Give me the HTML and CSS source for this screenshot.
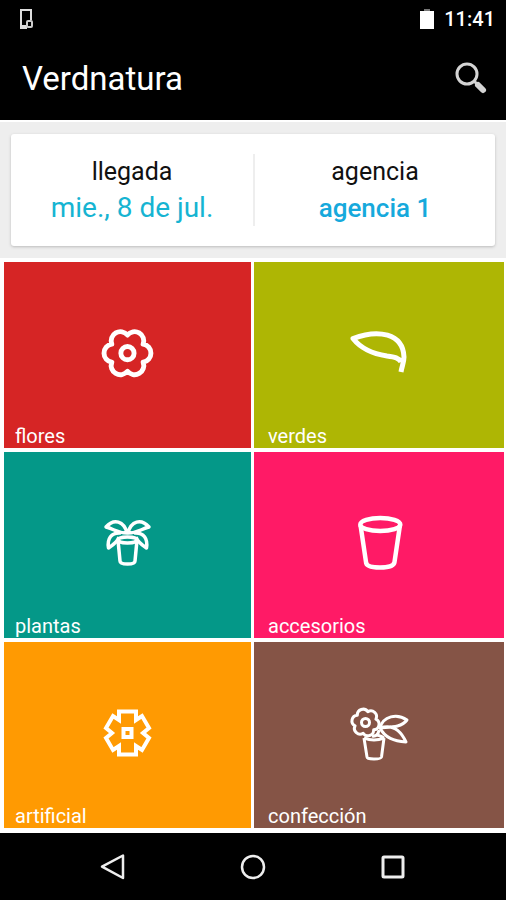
FILE: index.html
```html
<!DOCTYPE html>
<html lang="es">
<head>
<meta charset="utf-8">
<meta name="viewport" content="width=device-width, initial-scale=1">
<title>Verdnatura</title>
<link rel="stylesheet" href="styles.css">
</head>
<body>
<div class="status">
  <svg class="status-device" width="16" height="22" viewBox="0 0 16 22" aria-hidden="true">
    <path d="M12 12V2H2v17h5" fill="none" stroke="#ddd" stroke-width="2" stroke-linejoin="round"/>
    <path d="M1 1h12v2H1zM1 17h7v4H1z" fill="#ddd"/>
    <rect x="8" y="13" width="5" height="6" rx="1" fill="#000" stroke="#ccc" stroke-width="2"/>
  </svg>
  <svg class="status-battery" width="14" height="22" viewBox="0 0 14 22" aria-hidden="true">
    <path d="M4 1h6v2H4z" fill="#777"/><path d="M0 3h14v18H0z" fill="#fff"/>
  </svg>
  <span class="clock">11:41</span>
</div>
<header class="appbar">
  <h1 class="title">Verdnatura</h1>
  <button class="icon-button" type="button" aria-label="Buscar">
    <svg width="34" height="34" viewBox="0 0 34 34" fill="none" stroke="#d4d4d4" aria-hidden="true">
      <circle cx="13" cy="12" r="10" stroke-width="3"/>
      <path d="M20 19l4 4" stroke-width="3"/>
      <path d="M24 23l5 5" stroke-width="6" stroke-linecap="round"/>
    </svg>
  </button>
</header>
<main>
  <section class="delivery">
    <div class="card">
      <button class="choice" type="button">
        <span class="choice-label">llegada</span>
        <span class="choice-value choice-date">mie., 8 de jul.</span>
      </button>
      <button class="choice" type="button">
        <span class="choice-label">agencia</span>
        <span class="choice-value choice-agency">agencia 1</span>
      </button>
    </div>
  </section>
  <nav class="tiles" aria-label="Categorías">
    <a class="tile flores" href="#flores">
      <svg class="tile-icon" viewBox="7.500 5 60 60" stroke-width="4.600" aria-hidden="true">
        <path d="M37 16.300A8.600 8.600 0 0 1 51.700 24.800A8.600 8.600 0 0 1 51.700 41.800A8.600 8.600 0 0 1 37 50.300A8.600 8.600 0 0 1 22.300 41.800A8.600 8.600 0 0 1 22.300 24.800A8.600 8.600 0 0 1 37 16.300Z"/>
        <circle cx="37" cy="33.300" r="6.200"/>
      </svg>
      <span class="tile-name">flores</span>
    </a>
    <a class="tile verdes" href="#verdes">
      <svg class="tile-icon" viewBox="7 3 64 64" stroke-width="5" aria-hidden="true">
        <path d="M61 52C62 46 64 42 64 37C63 13 38 9 13 18.500C22 30 34 34 47 36C55 37 59 38 61 42"/>
      </svg>
      <span class="tile-name">verdes</span>
    </a>
    <a class="tile plantas" href="#plantas">
      <svg class="tile-icon" viewBox="6 8 64 64" stroke-width="3.500" aria-hidden="true">
        <path d="M28 35L30 56Q30 59 37.500 59Q45 59 45 56L47 35"/>
        <ellipse cx="37.500" cy="35" rx="9.500" ry="3"/>
        <path d="M37 28C34 16 24 13 16 22C24 24 27 28 37 28ZM38 28C41 16 51 13 59 22C51 24 48 28 38 28Z"/>
        <path d="M31 28C21 27 17 34 18.500 43C23 40 28 36 29 32M44 28C54 27 58 34 56.500 43C52 40 47 36 46 32"/>
      </svg>
      <span class="tile-name">plantas</span>
    </a>
    <a class="tile accesorios" href="#accesorios">
      <svg class="tile-icon" viewBox="7 8 64 64" stroke-width="4.500" aria-hidden="true">
        <ellipse cx="40.300" cy="19.500" rx="20" ry="6.500"/>
        <path d="M20.500 20L26 57Q26 62.500 40 62.500Q54 62.500 54.500 57L60 20"/>
      </svg>
      <span class="tile-name">accesorios</span>
    </a>
    <a class="tile artificial" href="#artificial">
      <svg class="tile-icon" viewBox="6 8 64 64" stroke-width="4" aria-hidden="true">
        <path d="M29 16.500H46V25L52 21L59 33L53 38L59 43L52 55L46 51V59.500H29V51L23 55L16 43L22 38L16 33L23 21L29 25Z"/>
        <rect x="33.500" y="34" width="8" height="8"/>
      </svg>
      <span class="tile-name">artificial</span>
    </a>
    <a class="tile confeccion" href="#confeccion">
      <svg class="tile-icon" viewBox="7 8 64 64" stroke-width="3" aria-hidden="true">
        <path d="M25.500 16.500A5.700 5.700 0 0 1 35 22A5.700 5.700 0 0 1 35 33A5.700 5.700 0 0 1 25.500 38.500A5.700 5.700 0 0 1 16 33A5.700 5.700 0 0 1 16 22A5.700 5.700 0 0 1 25.500 16.500Z" transform="rotate(12 25.500 27.500)"/>
        <circle cx="25.500" cy="27.500" r="4"/>
        <path d="M24 43L27 62Q27 64 34 64Q41 64 41.500 62L44 43"/>
        <path d="M24 43Q34 47 44 43M32 41Q38 42 39 35M37 40Q42 41 44 43"/>
        <path d="M40 33C43 21 57 18 67 25C61 33 50 32 40 33ZM40 33C52 29 60 34 66 47C54 46 45 43 40 33Z"/>
      </svg>
      <span class="tile-name">confección</span>
    </a>
  </nav>
</main>
<footer class="navbar">
  <button class="icon-button" type="button" aria-label="Atrás">
    <svg width="28" height="28" viewBox="0 0 28 28" fill="none" stroke="#eee" stroke-width="2.500" stroke-linejoin="round" aria-hidden="true"><path d="M24 2.500V25L3 13.700Z"/></svg>
  </button>
  <button class="icon-button" type="button" aria-label="Inicio">
    <svg width="28" height="28" viewBox="0 0 28 28" fill="none" stroke="#eee" stroke-width="2.500" aria-hidden="true"><circle cx="14" cy="14" r="11"/></svg>
  </button>
  <button class="icon-button" type="button" aria-label="Recientes">
    <svg width="28" height="28" viewBox="0 0 28 28" fill="none" stroke="#eee" stroke-width="3" aria-hidden="true"><rect x="4" y="4" width="20" height="20" rx="1"/></svg>
  </button>
</footer>
</body>
</html>
```
FILE: styles.css
```css
* {
  box-sizing: border-box;
}

body {
  margin: 0;
  min-height: 100vh;
  display: flex;
  flex-direction: column;
  background: #000;
  font-family: Roboto, "Liberation Sans", sans-serif;
}

button {
  margin: 0;
  padding: 0;
  border: 0;
  background: none;
  font: inherit;
  cursor: pointer;
}

svg {
  display: block;
}

.status {
  display: flex;
  align-items: center;
  gap: 10px;
  height: 38px;
  padding: 0 11px 0 19px;
  color: #fff;
}

.status-device {
  margin-right: auto;
}

.clock {
  font-size: 20px;
  font-weight: 500;
  line-height: 24px;
}

.appbar {
  display: flex;
  align-items: center;
  justify-content: space-between;
  height: 82px;
  padding: 0 18px 0 22px;
}

.title {
  margin: 0;
  color: #fff;
  font-size: 33px;
  font-weight: 400;
  line-height: 40px;
}

main {
  flex: 1;
  display: flex;
  flex-direction: column;
  background: #fff;
}

.delivery {
  padding: 12px 11px;
  border-top: 2px solid #fff;
  background: #eee;
}

.card {
  display: grid;
  grid-template-columns: 1fr 1fr;
  padding: 20px 0;
  border-radius: 3px;
  background: #fff;
  box-shadow: 0 1px 3px #bbb;
}

.choice {
  display: flex;
  flex-direction: column;
  align-items: center;
  height: 72px;
}

.choice + .choice {
  border-left: 2px solid #eee;
}

.choice-label,
.choice-value {
  line-height: 36px;
}

.choice-label {
  color: #111;
  font-size: 25px;
}

.choice-date {
  color: #16b4d2;
  font-size: 28px;
}

.choice-agency {
  color: #16a9dc;
  font-size: 26px;
  font-weight: 500;
}

.tiles {
  flex: 1;
  display: grid;
  grid-template-columns: 247fr 250fr;
  grid-auto-rows: 1fr;
  gap: 4px 3px;
  padding: 4px 2px 5px 4px;
}

.tile {
  display: grid;
  color: #fff;
  text-decoration: none;
}

.tile-icon,
.tile-name {
  grid-area: 1 / 1;
}

.tile-icon {
  place-self: center;
  width: 64px;
  height: 64px;
  fill: none;
  stroke: #fff;
  stroke-linejoin: round;
}

.tile-name {
  align-self: end;
  padding: 0 11px;
  font-size: 20px;
  line-height: 24px;
}

.tile:nth-child(even) .tile-name {
  padding: 0 14px;
}

.flores {
  background: #d62525;
}

.verdes {
  background: #aeb604;
}

.plantas {
  background: #049888;
}

.accesorios {
  background: #ff1a66;
}

.artificial {
  background: #ff9a02;
}

.confeccion {
  background: #855446;
}

.artificial .tile-icon {
  stroke-linejoin: miter;
}

.navbar {
  display: flex;
  align-items: center;
  justify-content: center;
  height: 67px;
}

.navbar .icon-button {
  padding: 0 56px;
}
```
